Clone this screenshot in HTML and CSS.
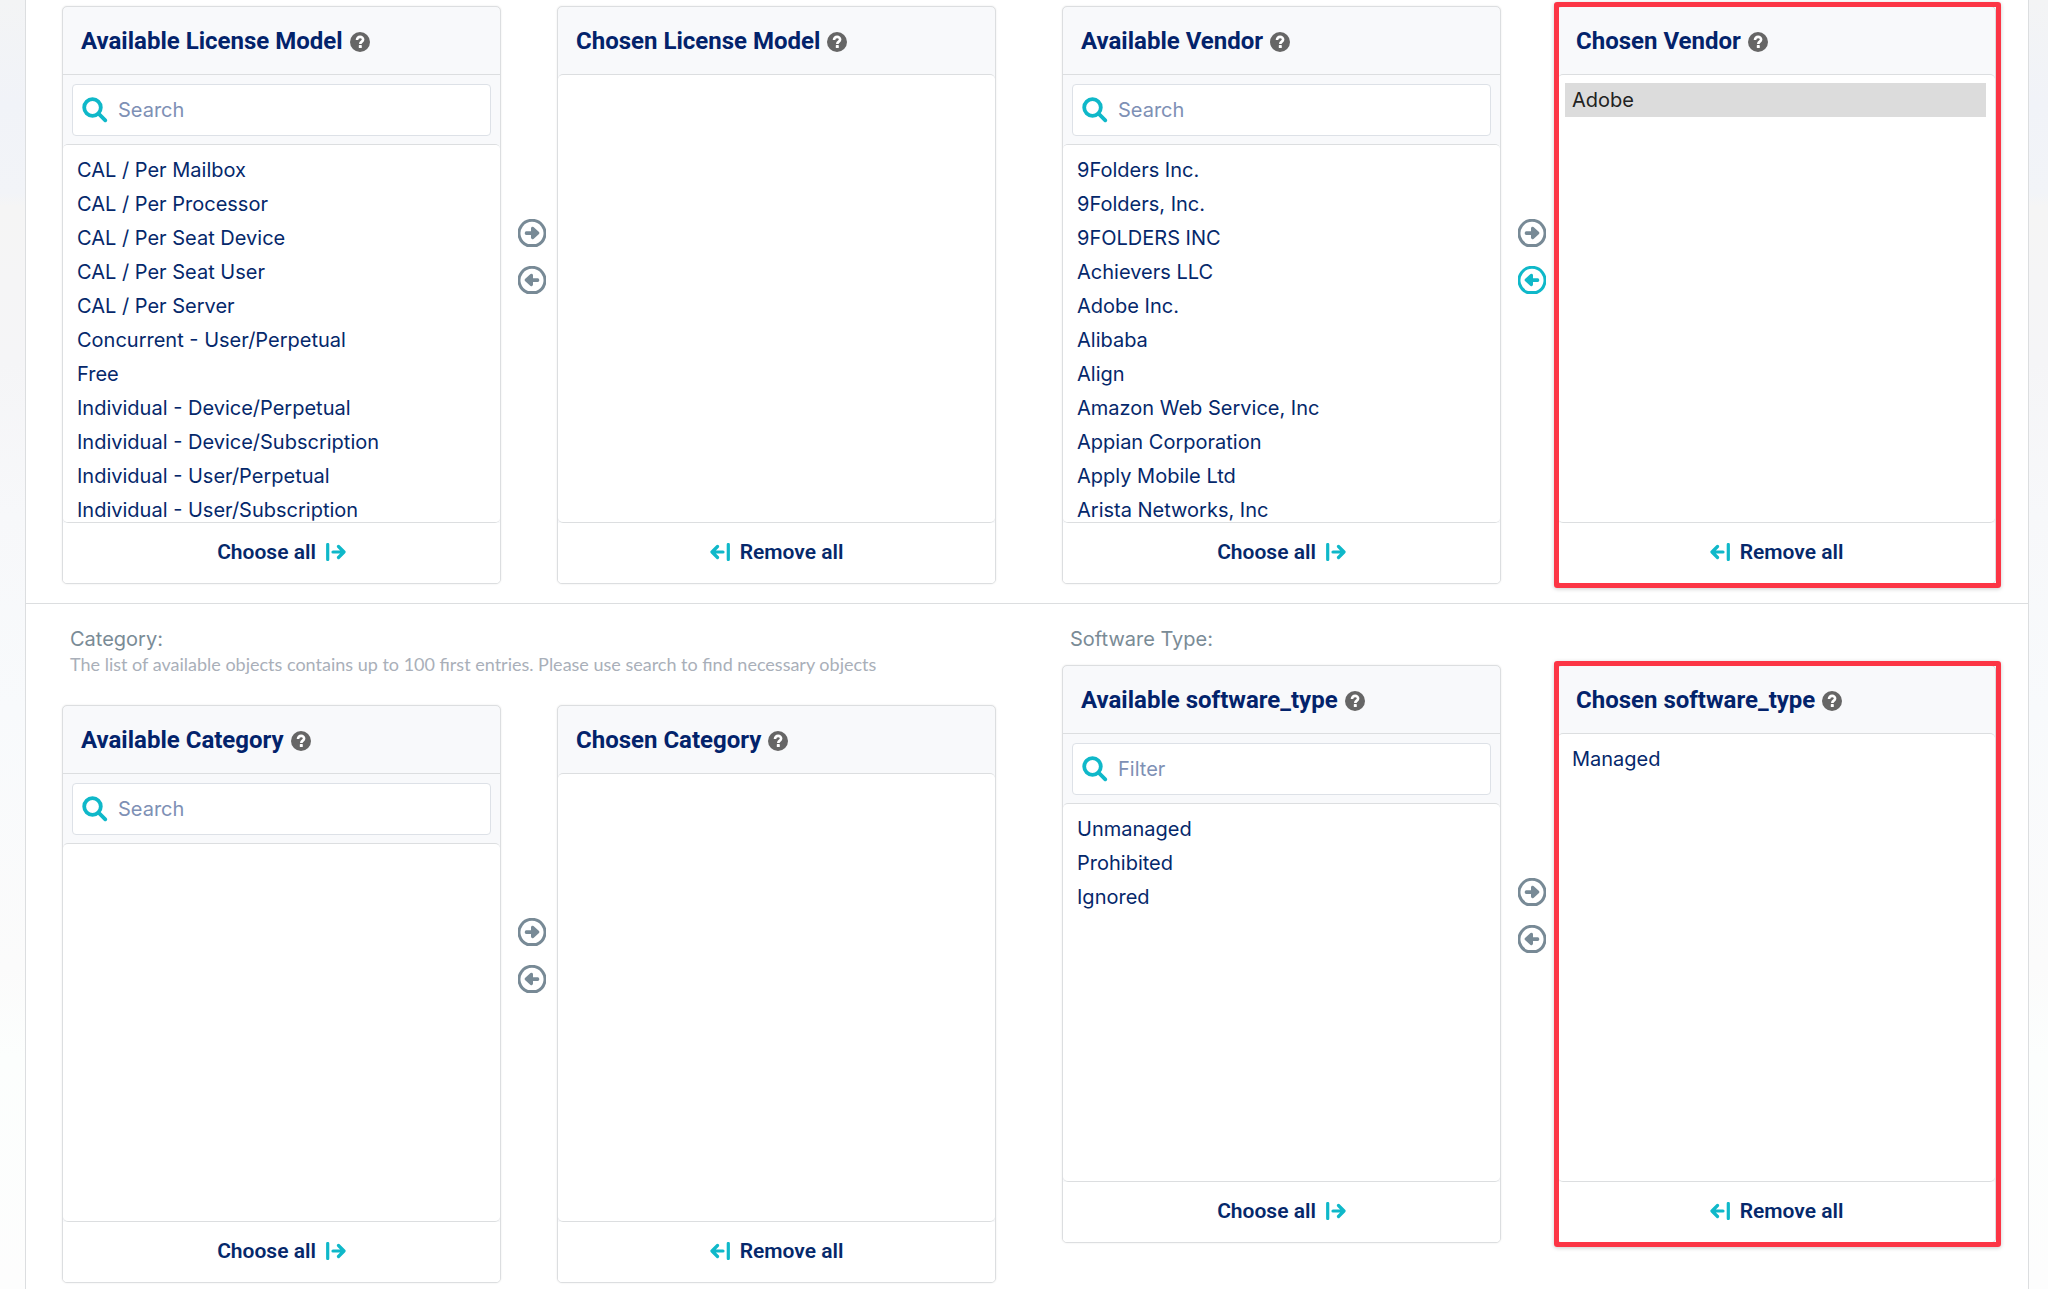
FILE: index.html
```html
<!DOCTYPE html>
<html lang="en">
<head>
<meta charset="utf-8">
<meta name="viewport" content="width=device-width, initial-scale=1">
<title>Software filters</title>
<link rel="stylesheet" href="styles.css">
</head>
<body>
<svg class="sprite" aria-hidden="true">
  <symbol id="i-help" viewBox="0 0 20 20">
    <circle cx="10" cy="10" r="10" fill="#666"/>
    <path d="M7 7.9C7 5.9 8.300 4.900 10.100 4.900S13.100 6 13.100 7.500C13.100 9.700 10.300 9.600 10.300 12" fill="none" stroke="#fff" stroke-width="2.600"/>
    <rect x="8.800" y="13.100" width="3" height="3" rx=".6" fill="#fff"/>
  </symbol>
  <symbol id="i-search" viewBox="0 0 26 26">
    <circle cx="10.500" cy="10.500" r="8.300" fill="none" stroke="currentColor" stroke-width="3.800"/>
    <path d="M16.800 16.800 23.300 23.300" fill="none" stroke="currentColor" stroke-width="3.800" stroke-linecap="round"/>
  </symbol>
  <symbol id="i-right" viewBox="0 0 28 28">
    <path d="M9.500 26.500A13 13 0 1 1 18.500 26.500Z" fill="none" stroke="currentColor" stroke-width="3" stroke-linejoin="round"/>
    <path d="M8.300 12.300H13V9.200Q13.500 7 15.500 8.100L21 13Q21.900 14 21 15L15.500 19.900Q13.500 21 13 18.800V16.100H8.300Q6.700 15.900 6.700 14.200T8.300 12.300Z" fill="currentColor"/>
  </symbol>
  <symbol id="i-left" viewBox="0 0 28 28">
    <use href="#i-right" transform="matrix(-1 0 0 1 28 0)" width="28" height="28"/>
  </symbol>
  <symbol id="i-all" viewBox="0 0 20 18">
    <path d="M1.700 1.500V16.500M7 9H17.500M12.500 3.500 18 9 12.500 14.500" fill="none" stroke="currentColor" stroke-width="3.200" stroke-linecap="round" stroke-linejoin="round"/>
  </symbol>
  <symbol id="i-none" viewBox="0 0 20 18">
    <use href="#i-all" transform="matrix(-1 0 0 1 20 0)" width="20" height="18"/>
  </symbol>
</svg>

<main class="sheet">
  <section class="row">
    <div class="field">
      <div class="picker">
        <div class="panel">
          <h2 class="panel-head ruled"><label for="license-from">Available License Model</label><svg class="help"><use href="#i-help"/></svg></h2>
          <div class="search"><label class="search-box"><svg class="glass"><use href="#i-search"/></svg><input type="text" placeholder="Search" aria-label="Search license model"></label></div>
          <select class="list" id="license-from" multiple>
            <option>CAL / Per Mailbox</option>
            <option>CAL / Per Processor</option>
            <option>CAL / Per Seat Device</option>
            <option>CAL / Per Seat User</option>
            <option>CAL / Per Server</option>
            <option>Concurrent - User/Perpetual</option>
            <option>Free</option>
            <option>Individual - Device/Perpetual</option>
            <option>Individual - Device/Subscription</option>
            <option>Individual - User/Perpetual</option>
            <option>Individual - User/Subscription</option>
          </select>
          <button class="all" type="button">Choose all<svg class="bar-arrow"><use href="#i-all"/></svg></button>
        </div>
        <div class="moves">
          <button class="move" type="button" aria-label="Choose"><svg><use href="#i-right"/></svg></button>
          <button class="move" type="button" aria-label="Remove"><svg><use href="#i-left"/></svg></button>
        </div>
        <div class="panel">
          <h2 class="panel-head"><label for="license-to">Chosen License Model</label><svg class="help"><use href="#i-help"/></svg></h2>
          <select class="list" id="license-to" multiple></select>
          <button class="all" type="button"><svg class="bar-arrow"><use href="#i-none"/></svg>Remove all</button>
        </div>
      </div>
    </div>
    <div class="field">
      <div class="picker">
        <div class="panel">
          <h2 class="panel-head ruled"><label for="vendor-from">Available Vendor</label><svg class="help"><use href="#i-help"/></svg></h2>
          <div class="search"><label class="search-box"><svg class="glass"><use href="#i-search"/></svg><input type="text" placeholder="Search" aria-label="Search vendor"></label></div>
          <select class="list" id="vendor-from" multiple>
            <option>9Folders Inc.</option>
            <option>9Folders, Inc.</option>
            <option>9FOLDERS INC</option>
            <option>Achievers LLC</option>
            <option>Adobe Inc.</option>
            <option>Alibaba</option>
            <option>Align</option>
            <option>Amazon Web Service, Inc</option>
            <option>Appian Corporation</option>
            <option>Apply Mobile Ltd</option>
            <option>Arista Networks, Inc</option>
          </select>
          <button class="all" type="button">Choose all<svg class="bar-arrow"><use href="#i-all"/></svg></button>
        </div>
        <div class="moves">
          <button class="move" type="button" aria-label="Choose"><svg><use href="#i-right"/></svg></button>
          <button class="move active" type="button" aria-label="Remove"><svg><use href="#i-left"/></svg></button>
        </div>
        <div class="panel marked">
          <h2 class="panel-head"><label for="vendor-to">Chosen Vendor</label><svg class="help"><use href="#i-help"/></svg></h2>
          <select class="list" id="vendor-to" multiple>
            <option selected>Adobe</option>
          </select>
          <button class="all" type="button"><svg class="bar-arrow"><use href="#i-none"/></svg>Remove all</button>
        </div>
      </div>
    </div>
  </section>

  <section class="row labelled">
    <div class="field">
      <h3 class="field-name">Category:</h3>
      <p class="note">The list of available objects contains up to 100 first entries. Please use search to find necessary objects</p>
      <div class="picker">
        <div class="panel">
          <h2 class="panel-head ruled"><label for="category-from">Available Category</label><svg class="help"><use href="#i-help"/></svg></h2>
          <div class="search"><label class="search-box"><svg class="glass"><use href="#i-search"/></svg><input type="text" placeholder="Search" aria-label="Search category"></label></div>
          <select class="list" id="category-from" multiple></select>
          <button class="all" type="button">Choose all<svg class="bar-arrow"><use href="#i-all"/></svg></button>
        </div>
        <div class="moves">
          <button class="move" type="button" aria-label="Choose"><svg><use href="#i-right"/></svg></button>
          <button class="move" type="button" aria-label="Remove"><svg><use href="#i-left"/></svg></button>
        </div>
        <div class="panel">
          <h2 class="panel-head"><label for="category-to">Chosen Category</label><svg class="help"><use href="#i-help"/></svg></h2>
          <select class="list" id="category-to" multiple></select>
          <button class="all" type="button"><svg class="bar-arrow"><use href="#i-none"/></svg>Remove all</button>
        </div>
      </div>
    </div>
    <div class="field">
      <h3 class="field-name">Software Type:</h3>
      <div class="picker">
        <div class="panel">
          <h2 class="panel-head ruled"><label for="type-from">Available software_type</label><svg class="help"><use href="#i-help"/></svg></h2>
          <div class="search"><label class="search-box"><svg class="glass"><use href="#i-search"/></svg><input type="text" placeholder="Filter" aria-label="Filter software type"></label></div>
          <select class="list" id="type-from" multiple>
            <option>Unmanaged</option>
            <option>Prohibited</option>
            <option>Ignored</option>
          </select>
          <button class="all" type="button">Choose all<svg class="bar-arrow"><use href="#i-all"/></svg></button>
        </div>
        <div class="moves">
          <button class="move" type="button" aria-label="Choose"><svg><use href="#i-right"/></svg></button>
          <button class="move" type="button" aria-label="Remove"><svg><use href="#i-left"/></svg></button>
        </div>
        <div class="panel marked">
          <h2 class="panel-head"><label for="type-to">Chosen software_type</label><svg class="help"><use href="#i-help"/></svg></h2>
          <select class="list" id="type-to" multiple>
            <option>Managed</option>
          </select>
          <button class="all" type="button"><svg class="bar-arrow"><use href="#i-none"/></svg>Remove all</button>
        </div>
      </div>
    </div>
  </section>
</main>
</body>
</html>
```
FILE: styles.css
```css
:root {
  --navy: #05286b;
  --teal: #0fb8c9;
  --line: #dcdee0;
  --tint: #f8f9fb;
  --body: Inter, "Liberation Sans", sans-serif;
  --head: Roboto, "Liberation Sans", sans-serif;
}

* { box-sizing: border-box; }

body {
  margin: 0;
  padding: 0 19px 0 25px;
  background: linear-gradient(#f3f4f5, #f1f3f8 8%, #f2f4f8 15%, #f5f5f5 16%, #f5f5f7 28%, #f7f8fa 40%, #f8fafc 55%, #fbfbfb 75%, #fcfefd 82%, #fdfdfd);
  color: var(--navy);
  font: 20px/28px var(--body);
}

h2, h3, p { margin: 0; }
button, input, select { font: inherit; color: inherit; }
svg { display: block; flex: none; }
.sprite { position: absolute; width: 0; height: 0; }

.sheet {
  min-height: 100vh;
  background: #fff;
  border: solid var(--line);
  border-width: 0 1px;
}

.row {
  display: grid;
  grid-template-columns: 1fr 1fr;
  gap: 66px;
  align-items: start;
  padding: 6px 32px 19px 36px;
}
.row + .row { border-top: 1px solid var(--line); }
.labelled { padding-top: 21px; padding-bottom: 6px; }
.field { min-width: 0; }

.field-name {
  margin-bottom: 12px;
  padding-left: 8px;
  color: #7a8b96;
  font-size: 20px;
  font-weight: 400;
}
.field-name:has(+ .note) { margin-bottom: 0; }
.note {
  margin-bottom: 30px;
  padding-left: 8px;
  color: #a9afb9;
  font: 18px/22px Lato, sans-serif;
}

.picker {
  display: grid;
  grid-template-columns: 1fr 56px 1fr;
}

.panel {
  position: relative;
  display: flex;
  flex-direction: column;
  min-width: 0;
  background: var(--tint);
  border: 1px solid var(--line);
  border-radius: 5px;
  box-shadow: 0 0 2px rgba(0, 0, 0, .1);
}
.panel-head {
  display: flex;
  align-items: center;
  gap: 7px;
  height: 67px;
  padding-left: 18px;
  color: #03236b;
  font: 700 24px/32px var(--head);
}
.ruled { height: 68px; border-bottom: 1px solid var(--line); }
.help { width: 20px; height: 20px; margin-top: 3px; }

.search { padding: 9px 9px 8px; }
.search-box {
  display: flex;
  align-items: center;
  gap: 10px;
  height: 52px;
  padding: 0 9px;
  background: #fff;
  border: 1px solid #dde1e7;
  border-radius: 4px;
}
.glass { width: 26px; height: 26px; color: var(--teal); }
.search-box input {
  flex: 1;
  min-width: 0;
  padding: 0;
  border: 0;
  outline: 0;
  background: none;
}
.search-box input::placeholder { color: #7e90b5; opacity: 1; }

.list {
  flex: 1 0 379px;
  width: 100%;
  height: 379px;
  padding: 8px 9px 0 7px;
  overflow: auto;
  scrollbar-width: none;
  background: #fff;
  border: solid var(--line);
  border-width: 1px 0;
  border-radius: 5px;
  outline: 0;
}
.list option {
  padding: 5px 7px;
  color: var(--navy);
}
.list option:checked {
  background: #dcdcdc;
  color: #222;
}

.all {
  display: flex;
  align-items: center;
  justify-content: center;
  gap: 10px;
  height: 60px;
  padding: 0 0 2px;
  border: 0;
  border-radius: 0 0 4px 4px;
  background: #fff;
  font: 600 21px/28px var(--head);
}
.bar-arrow { width: 20px; height: 18px; color: var(--teal); }

.moves {
  display: flex;
  flex-direction: column;
  align-items: center;
  gap: 19px;
  padding: 213px 0 0 6px;
}
.move {
  width: 28px;
  height: 28px;
  padding: 0;
  border: 0;
  background: none;
  color: #788a96;
}
.move svg { width: 28px; height: 28px; }
.move.active { color: var(--teal); }

/* Callout frame drawn around a highlighted panel */
.marked::after {
  content: "";
  position: absolute;
  inset: -5px -6px -5px -4px;
  border: 5px solid #fc3545;
  border-radius: 3px;
  box-shadow: 0 1px 4px rgba(0, 0, 0, .2);
  pointer-events: none;
}
```
